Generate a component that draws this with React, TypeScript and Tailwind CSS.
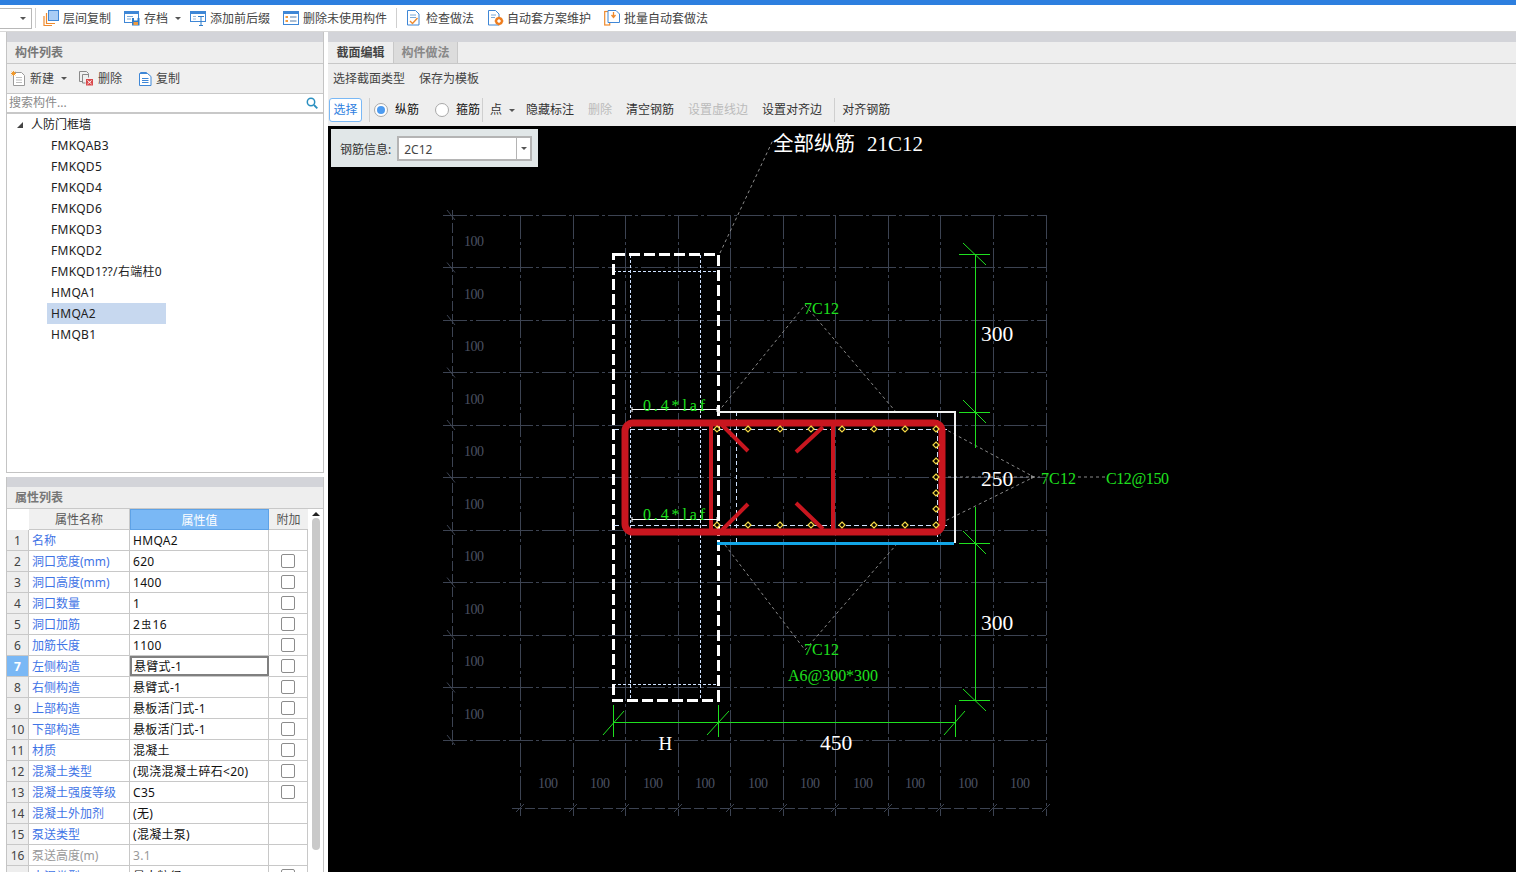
import React from "react";

const font = "font-['Noto_Sans','Noto_Sans_CJK_SC',sans-serif]";

const treeItems = ["FMKQAB3", "FMKQD5", "FMKQD4", "FMKQD6", "FMKQD3", "FMKQD2", "FMKQD1??/右端柱0", "HMQA1", "HMQA2", "HMQB1"];

const rows: { name: string; value: React.ReactNode; check: boolean }[] = [
  { name: "名称", value: "HMQA2", check: false },
  { name: "洞口宽度(mm)", value: "620", check: true },
  { name: "洞口高度(mm)", value: "1400", check: true },
  { name: "洞口数量", value: "1", check: true },
  { name: "洞口加筋", value: <>2<span className="relative top-[-1px] mx-[1px] text-[10px]">虫</span>16</>, check: true },
  { name: "加筋长度", value: "1100", check: true },
  { name: "左侧构造", value: "悬臂式-1", check: true },
  { name: "右侧构造", value: "悬臂式-1", check: true },
  { name: "上部构造", value: "悬板活门式-1", check: true },
  { name: "下部构造", value: "悬板活门式-1", check: true },
  { name: "材质", value: "混凝土", check: true },
  { name: "混凝土类型", value: "(现浇混凝土碎石<20)", check: true },
  { name: "混凝土强度等级", value: "C35", check: true },
  { name: "混凝土外加剂", value: "(无)", check: false },
  { name: "泵送类型", value: "(混凝土泵)", check: false },
  { name: "泵送高度(m)", value: "3.1", check: false },
  { name: "水泥类型", value: "最大粒径", check: true },
];

function Caret() {
  return <span className="inline-block h-0 w-0 border-x-[3px] border-t-[3px] border-x-transparent border-t-[#555]" />;
}

function CopyLayersIcon() {
  return (
    <svg width="16" height="16" viewBox="0 0 16 16" fill="none">
      <rect x="5.5" y="0.5" width="10" height="10" fill="#a9cdf5" stroke="#3f87d6" />
      <path d="M3.5 3v10.5H12M1 6v9.500h8" stroke="#ee8a2e" strokeWidth="1.200" />
    </svg>
  );
}
function SaveIcon() {
  return (
    <svg width="16" height="16" viewBox="0 0 16 16" fill="none">
      <rect x="0.500" y="1.500" width="14" height="11" fill="#fff" stroke="#3f87d6" />
      <rect x="0.500" y="1.500" width="14" height="2.500" fill="#3f87d6" />
      <path d="M3 6.500h6M3 9h4" stroke="#7aa9d8" />
      <rect x="8" y="8" width="7.500" height="7.500" fill="#2f7cc9" />
      <rect x="10" y="8" width="3.500" height="2.500" fill="#fff" />
      <rect x="9.500" y="12" width="4.500" height="3" fill="#f09a3e" />
    </svg>
  );
}
function PrefixIcon() {
  return (
    <svg width="16" height="16" viewBox="0 0 16 16" fill="none">
      <rect x="0.500" y="1.500" width="15" height="10" fill="#fff" stroke="#3f87d6" />
      <rect x="0.500" y="1.500" width="15" height="2.500" fill="#3f87d6" />
      <path d="M3 6.500h3M3 9h3" stroke="#9ab8d8" />
      <path d="M8 6.500h6M11 6.500v9M9 15.500h4" stroke="#2f7cc9" />
    </svg>
  );
}
function ListIcon() {
  return (
    <svg width="16" height="14" viewBox="0 0 16 14" fill="none">
      <rect x="0.500" y="0.500" width="15" height="13" fill="#fff" stroke="#3f87d6" />
      <rect x="0.500" y="0.500" width="15" height="2.500" fill="#3f87d6" />
      <rect x="2.500" y="5" width="2.500" height="2" fill="#f09a3e" />
      <rect x="2.500" y="9" width="2.500" height="2" fill="#f09a3e" />
      <path d="M7 6h6.500M7 10h6.500" stroke="#557ca8" />
    </svg>
  );
}
function CheckDocIcon() {
  return (
    <svg width="15" height="16" viewBox="0 0 15 16" fill="none">
      <path d="M1.500 0.500h8l3.500 3.500v11h-11.500z" fill="#fff" stroke="#3f87d6" />
      <path d="M4 5h6M4 7.500h6" stroke="#7aa9d8" />
      <path d="M4 11l2.500 2.500 5-5.500" stroke="#ee8a2e" strokeWidth="1.400" />
    </svg>
  );
}
function GearDocIcon() {
  return (
    <svg width="16" height="16" viewBox="0 0 16 16" fill="none">
      <path d="M0.500 0.500h7l3.500 3.500v11h-10.500z" fill="#fff" stroke="#3f87d6" />
      <path d="M3 5h5M3 7.500h4" stroke="#7aa9d8" />
      <circle cx="11" cy="11" r="3" fill="#fff" stroke="#ee7d1e" strokeWidth="2" />
      <path d="M11 6.500v9M6.500 11h9M8 8l6 6M14 8l-6 6" stroke="#ee7d1e" strokeWidth="1" />
      <circle cx="11" cy="11" r="1.500" fill="#fff" />
    </svg>
  );
}
function BatchIcon() {
  return (
    <svg width="16" height="16" viewBox="0 0 16 16" fill="none">
      <rect x="0.700" y="1.500" width="5" height="13.500" stroke="#ee8a2e" strokeWidth="1.200" />
      <path d="M4 0.500h8l3.500 3.500v8.500h-11.500z" fill="#fff" stroke="#3f87d6" />
      <path d="M9.500 2v5M7.500 5l2 2.500 2-2.500" stroke="#ee8a2e" strokeWidth="1.300" />
    </svg>
  );
}
function NewIcon() {
  return (
    <svg width="15" height="15" viewBox="0 0 15 15" fill="none">
      <path d="M2.500 1.500h8l3 3v10h-11z" fill="#fff" stroke="#9a9a9a" />
      <path d="M5 6.500h6M5 9h6M5 11.500h6" stroke="#bdbdbd" />
      <path d="M0 2.500h5M2.500 0v5M0.700 0.700l3.600 3.600M4.300 0.700l-3.600 3.600" stroke="#f09a2e" />
    </svg>
  );
}
function DeleteIcon() {
  return (
    <svg width="15" height="15" viewBox="0 0 15 15" fill="none">
      <path d="M0.500 0.500h7l2 2v1.500M0.500 0.500v10h3" stroke="#8a8a8a" />
      <path d="M3.500 3.500h6v3M3.500 3.500v8.500h3" stroke="#8a8a8a" />
      <rect x="7" y="8" width="7" height="6.500" fill="#d9484b" />
      <path d="M8.500 9.500l4 3.500M12.500 9.500l-4 3.500" stroke="#fff" />
    </svg>
  );
}
function CopyDocIcon() {
  return (
    <svg width="13" height="14" viewBox="0 0 13 14" fill="none">
      <path d="M1.500 1.500v-1h6l1 1" stroke="#3f87d6" />
      <path d="M0.500 1.500h8l3.500 3v9h-11.500z" fill="#fff" stroke="#3f87d6" />
      <path d="M3 6.500h6.500M3 8.500h6.500M3 10.500h6.500" stroke="#3f87d6" />
    </svg>
  );
}
function SearchIcon() {
  return (
    <svg width="12" height="12" viewBox="0 0 12 12" fill="none">
      <circle cx="5" cy="5" r="3.700" stroke="#2a8fc0" strokeWidth="1.500" />
      <path d="M8 8l3.300 3.300" stroke="#2a8fc0" strokeWidth="1.800" />
    </svg>
  );
}

function Radio({ on }: { on?: boolean }) {
  return (
    <span className="flex h-[14px] w-[14px] items-center justify-center rounded-full border border-[#a8a8a8] bg-white">
      {on && <span className="h-[8px] w-[8px] rounded-full bg-[#4d9bf0]" />}
    </span>
  );
}

function ToolLabel({ children }: { children: string }) {
  return <span className="pt-[2px]">{children}</span>;
}

function TopBar() {
  return (
    <div className="flex h-[27px] shrink-0 items-center border-b border-[#d8d8d8] bg-white text-[12px] leading-none text-[#444]">
      <div className="flex h-[21px] w-[32px] items-center justify-end border border-l-0 border-[#b8b8b8] pr-[5px]">
        <Caret />
      </div>
      <div className="ml-[3px] h-[20px] w-px bg-[#cfcfcf]" />
      <div className="ml-[7px] flex items-center gap-[4px]"><CopyLayersIcon /><ToolLabel>层间复制</ToolLabel></div>
      <div className="ml-[13px] flex items-center gap-[4px]"><SaveIcon /><ToolLabel>存档</ToolLabel></div>
      <div className="ml-[7px] flex items-center"><Caret /></div>
      <div className="ml-[9px] flex items-center gap-[4px]"><PrefixIcon /><ToolLabel>添加前后缀</ToolLabel></div>
      <div className="ml-[13px] flex items-center gap-[4px]"><ListIcon /><ToolLabel>删除未使用构件</ToolLabel></div>
      <div className="ml-[9px] h-[20px] w-px bg-[#cfcfcf]" />
      <div className="ml-[9px] flex items-center gap-[5px]"><CheckDocIcon /><ToolLabel>检查做法</ToolLabel></div>
      <div className="ml-[14px] flex items-center gap-[3px]"><GearDocIcon /><ToolLabel>自动套方案维护</ToolLabel></div>
      <div className="ml-[13px] flex items-center gap-[4px]"><BatchIcon /><ToolLabel>批量自动套做法</ToolLabel></div>
    </div>
  );
}

function PanelTitle({ title }: { title: string }) {
  return (
    <>
      <div className="h-[10px] shrink-0 bg-[#d3d4d9]" />
      <div className="flex h-[22px] shrink-0 items-center border-b border-[#c8c8c8] bg-[#eeeeee] pl-[8px] text-[12px] font-bold text-[#777]">
        {title}
      </div>
    </>
  );
}

function ComponentList() {
  return (
    <div className="flex h-[441px] shrink-0 flex-col border-x border-b border-[#c4c4c4] bg-white">
      <PanelTitle title="构件列表" />
      <div className="flex h-[30px] shrink-0 items-center border-b border-[#c8c8c8] bg-[#f0f0f0] pl-[4px] text-[12px] text-[#444]">
        <NewIcon />
        <span className="ml-[4px]">新建</span>
        <span className="ml-[7px] flex"><Caret /></span>
        <span className="ml-[12px] flex"><DeleteIcon /></span>
        <span className="ml-[4px]">删除</span>
        <span className="ml-[17px] flex"><CopyDocIcon /></span>
        <span className="ml-[4px]">复制</span>
      </div>
      <div className="flex h-[20px] shrink-0 items-center justify-between border-b-2 border-[#c8c8c8] pl-[2px] pr-[5px] text-[12px] text-[#8a8a8a]">
        <span>搜索构件...</span>
        <SearchIcon />
      </div>
      <div className="flex h-[21px] items-center pl-[10px] text-[12px] text-[#222]">
        <span className="h-0 w-0 border-b-[6px] border-l-[6px] border-b-[#444] border-l-transparent" />
        <span className="ml-[8px]">人防门框墙</span>
      </div>
      {treeItems.map((item) => (
        <div key={item} className="flex h-[21px] items-center pl-[40px] text-[12px] tracking-[0.3px] text-[#222]">
          <span className={item === "HMQA2" ? "flex h-[21px] w-[119px] items-center bg-[#c7d8ef] pl-[4px]" : "pl-[4px]"}>{item}</span>
        </div>
      ))}
    </div>
  );
}

function PropertyRow({ index, name, value, check }: { index: number; name: string; value: React.ReactNode; check: boolean }) {
  const selected = index === 7;
  const muted = index === 16;
  return (
    <div className="flex h-[21px] shrink-0 border-b border-[#c8c8c8] text-[12px]">
      <div className={selected ? "flex w-[22px] shrink-0 items-center justify-center border-r border-[#c8c8c8] bg-[#7ab8f5] pt-[2px] font-bold text-white" : "flex w-[22px] shrink-0 items-center justify-center border-r border-[#c8c8c8] bg-[#eeeeee] pt-[2px] text-[#444]"}>
        {index}
      </div>
      <div className={muted ? "flex w-[101px] shrink-0 items-center whitespace-nowrap border-r border-[#c8c8c8] pl-[3px] pt-[2px] text-[#999]" : "flex w-[101px] shrink-0 items-center whitespace-nowrap border-r border-[#c8c8c8] pl-[3px] pt-[2px] text-[#3f74e6]"}>
        {name}
      </div>
      <div className={selected ? "flex w-[139px] shrink-0 items-center border-2 border-[#808080] pl-[2px] pt-[1px] tracking-[0.3px] text-[#111]" : muted ? "flex w-[139px] shrink-0 items-center border-r border-[#c8c8c8] pl-[3px] pt-[2px] tracking-[0.3px] text-[#999]" : "flex w-[139px] shrink-0 items-center border-r border-[#c8c8c8] pl-[3px] pt-[2px] tracking-[0.3px] text-[#111]"}>
        <span>{value}</span>
      </div>
      <div className="flex w-[39px] shrink-0 items-center justify-center border-r border-[#c8c8c8]">
        {check && <span className="h-[14px] w-[14px] rounded-[2px] border border-[#8c8c8c] bg-white" />}
      </div>
    </div>
  );
}

function PropertyList() {
  return (
    <div className="mt-[4px] flex min-h-0 flex-1 flex-col border-x border-[#c4c4c4] bg-white">
      <PanelTitle title="属性列表" />
      <div className="flex min-h-0 flex-1">
        <div className="w-[301px] shrink-0 overflow-hidden">
          <div className="flex h-[21px] text-[12px]">
            <div className="w-[22px] shrink-0 bg-white" />
            <div className="flex w-[101px] shrink-0 items-center justify-center border-b border-r border-[#c8c8c8] bg-[#f0f0f0] pt-[2px] text-[#555]">属性名称</div>
            <div className="flex w-[139px] shrink-0 items-center justify-center border border-[#5ea2e6] bg-[#7ab8f5] pt-[2px] text-white">属性值</div>
            <div className="flex w-[39px] shrink-0 items-center justify-center border-b border-[#c8c8c8] bg-[#f0f0f0] pt-[2px] text-[#555]">附加</div>
          </div>
          {rows.map((r, i) => (
            <PropertyRow key={r.name} index={i + 1} name={r.name} value={r.value} check={r.check} />
          ))}
        </div>
        <div className="flex w-[15px] shrink-0 flex-col items-center pt-[3px]">
          <span className="h-0 w-0 border-x-[4px] border-b-[4px] border-x-transparent border-b-[#222]" />
          <span className="mt-[2px] h-[332px] w-[8px] rounded-full bg-[#c9c9c9]" />
        </div>
      </div>
    </div>
  );
}

const gridY = [215, 267.500, 320, 372.500, 425, 477.500, 530, 582.500, 635, 687.500, 740];
const gridX = [520, 573, 625, 678, 730, 783, 835, 888, 940, 993, 1046];
const leftLabels = [241, 294, 346, 399, 451, 504, 556, 609, 661, 714];
const bottomLabels = [548, 600, 653, 705, 758, 810, 863, 915, 968, 1020];
const rebarX = [717, 748, 780, 811, 842, 874, 905, 936];
const rebarY = [445, 461, 477, 493, 509];

function Rebar({ x, y }: { x: number; y: number }) {
  return <path d={`M${x} ${y - 3}L${x + 3} ${y}L${x} ${y + 3}L${x - 3} ${y}Z`} fill="#000" stroke="#f5d845" strokeWidth="1.200" />;
}

function CadText({ x, y, w, children }: { x: number; y: number; w: number; children: string }) {
  return <text x={x} y={y} textLength={w} lengthAdjust="spacing">{children}</text>;
}

function SectionDrawing() {
  const serif = "'Liberation Serif',serif";
  const grid = "#3c4352";
  const green = "#1fe01f";
  const leader = "#8a8a8a";
  return (
    <svg className="block h-full w-full" viewBox="328 126 1188 746" fill="none">
      {/* axis grid */}
      <g stroke={grid} strokeDasharray="24 3 3 3" shapeRendering="crispEdges">
        {gridY.map((y) => <line key={y} x1="443" y1={y} x2="1046" y2={y} />)}
        {gridX.map((x) => <line key={x} x1={x} y1="215" x2={x} y2="816" />)}
        <line x1="452" y1="210" x2="452" y2="745" strokeDasharray="10 3" />
        <line x1="512" y1="808" x2="1046" y2="808" strokeDasharray="10 3" />
      </g>
      <g stroke={grid}>
        {gridY.map((y) => <line key={y} x1="447" y1={y - 5} x2="455" y2={y + 5} />)}
        {[520, ...gridX].map((x, i) => <line key={i} x1={x - 4} y1="812" x2={x + 4} y2="804" />)}
      </g>
      <g fill="#4a5060" fontFamily={serif} fontSize="14">
        {leftLabels.map((y) => <CadText key={y} x={464} y={y + 5} w={20}>100</CadText>)}
        {bottomLabels.map((x) => <CadText key={x} x={x - 10} y={788} w={20}>100</CadText>)}
      </g>

      {/* leaders */}
      <g stroke={leader} strokeDasharray="3 3">
        <path d="M720 253L773 140" />
        <path d="M718 412L805 305L896 412" />
        <path d="M725 545L805 650L896 545" />
        <path d="M943 428L1034 477L943 522" />
        <path d="M936 477H1040M1078 477H1105" />
      </g>
      <path d="M1031 475L1035 477L1031 479Z" fill={leader} />

      {/* wall outline */}
      <g shapeRendering="crispEdges">
        <path d="M630 255V700M700 255V700M613 271H718M613 684H718" stroke="#cfe2ff" strokeDasharray="3 2" />
        <rect x="613.500" y="254.500" width="104.500" height="445.500" stroke="#fff" strokeWidth="3" strokeDasharray="11 4" />
        <path d="M736 412V543" stroke="#cfe2ff" strokeDasharray="4 3" />
        <path d="M614 429H950M614 525H950M937 412V543" stroke="#cfe2ff" strokeDasharray="5 3" />
        <path d="M717 412H955V543" stroke="#f2f2f2" strokeWidth="2" />
        <path d="M717 543H954" stroke="#12a5e6" strokeWidth="3" />
      </g>

      {/* stirrups */}
      <g stroke="#c8161f">
        <rect x="625" y="423" width="317" height="109" rx="8" strokeWidth="7" />
        <path d="M711 423V532M833 423V532" strokeWidth="4" />
        <path d="M722 425L748 451M823 427L796 452M722 530L748 504M823 529L796 503" strokeWidth="4" />
      </g>

      {/* rebars */}
      {rebarX.map((x) => <Rebar key={x} x={x} y={429} />)}
      {rebarX.map((x) => <Rebar key={x} x={x} y={525} />)}
      {rebarY.map((y) => <Rebar key={y} x={936} y={y} />)}

      {/* anchorage marks */}
      <path d="M632 409.500H717M632 407V412M717 407V412M632 519.500H717M632 517V522M717 517V522" stroke="#fff" />
      <g fill={green} fontFamily={serif} fontSize="16">
        <CadText x={643} y={411} w={62}>0.4*laf</CadText>
        <CadText x={643} y={520} w={62}>0.4*laf</CadText>
        <CadText x={804} y={314} w={35}>7C12</CadText>
        <CadText x={804} y={655} w={35}>7C12</CadText>
        <CadText x={788} y={681} w={90}>A6@300*300</CadText>
        <CadText x={1041} y={484} w={35}>7C12</CadText>
        <CadText x={1106} y={484} w={63}>C12@150</CadText>
      </g>

      {/* dimensions */}
      <g stroke={green}>
        <path d="M975.500 254V448M975.500 507V700" shapeRendering="crispEdges" />
        <path d="M959 254H990M959 412H990M959 543H990M959 700H990" shapeRendering="crispEdges" />
        <path d="M963 243L986 265M963 400L986 423M963 531L986 554M963 689L986 711" />
        <path d="M613 722H955" shapeRendering="crispEdges" />
        <path d="M613 705V737M718 705V737M955 705V737" shapeRendering="crispEdges" />
        <path d="M603 735L624 711M707 735L729 711M944 735L965 711" />
      </g>
      <g fill="#fff" fontFamily={serif} fontSize="21.500">
        <text x="981" y="341">300</text>
        <text x="981" y="486">250</text>
        <text x="981" y="630">300</text>
        <text x="658.500" y="750" fontSize="19">H</text>
        <text x="820" y="750">450</text>
      </g>
      <text x="773" y="151" fill="#fff" fontFamily="'Noto Sans CJK SC',sans-serif" fontSize="20.500">全部纵筋</text>
      <text x="867" y="151" fill="#fff" fontFamily={serif} fontSize="21">21C12</text>
    </svg>
  );
}

function Editor() {
  return (
    <div className="flex min-w-0 flex-1 flex-col bg-[#eeeeee]">
      <div className="h-[10px] shrink-0 bg-[#d3d4d9]" />
      <div className="flex h-[22px] shrink-0 border-b border-[#c8c8c8] text-[12px] font-bold">
        <div className="flex w-[66px] items-center justify-center border-r border-[#c8c8c8] bg-[#eeeeee] text-[#444]">截面编辑</div>
        <div className="flex w-[64px] items-center justify-center border-r border-[#c8c8c8] bg-[#dcdcdc] text-[#888]">构件做法</div>
      </div>
      <div className="flex h-[30px] shrink-0 items-center gap-[14px] pl-[5px] text-[12px] text-[#444]">
        <span>选择截面类型</span>
        <span>保存为模板</span>
      </div>
      <div className="flex h-[32px] shrink-0 items-center text-[12px] text-[#333]">
        <div className="ml-[1px] flex h-[24px] w-[33px] items-center justify-center rounded-[3px] border border-[#7ab8f5] bg-white text-[#2f7fe0]">选择</div>
        <div className="ml-[7px] h-[24px] w-px bg-[#cfcfcf]" />
        <div className="ml-[4px]"><Radio on /></div>
        <span className="ml-[7px] text-[#111]">纵筋</span>
        <div className="ml-[16px]"><Radio /></div>
        <span className="ml-[7px] text-[#111]">箍筋</span>
        <div className="ml-[2px] h-[24px] w-px bg-[#cfcfcf]" />
        <span className="ml-[7px]">点</span>
        <span className="ml-[7px] flex"><Caret /></span>
        <span className="ml-[11px]">隐藏标注</span>
        <span className="ml-[14px] text-[#bbb]">删除</span>
        <span className="ml-[14px]">清空钢筋</span>
        <span className="ml-[14px] text-[#bbb]">设置虚线边</span>
        <span className="ml-[14px]">设置对齐边</span>
        <div className="ml-[12px] h-[24px] w-px bg-[#cfcfcf]" />
        <span className="ml-[7px]">对齐钢筋</span>
      </div>
      <div className="relative min-h-0 flex-1 bg-black">
        <SectionDrawing />
        <div className="absolute left-[3px] top-[3px] flex h-[38px] w-[207px] items-center bg-[#e1e7e8] pl-[9px] pt-[1px] text-[12px] text-[#333]">
          <span className="pt-[2px]">钢筋信息:</span>
          <div className="ml-[6px] flex h-[25px] w-[135px] items-center border-2 border-[#b4b4b4] bg-white pl-[5px]">
            <span className="flex-1 pt-[2px] text-[#444]">2C12</span>
            <div className="flex h-full w-[14px] items-center justify-center border-l border-[#b4b4b4]"><Caret /></div>
          </div>
        </div>
      </div>
    </div>
  );
}

export default function App() {
  return (
    <div className={`flex h-[872px] w-[1516px] flex-col overflow-hidden bg-white ${font}`}>
      <div className="h-[5px] shrink-0 bg-[#2d7fdf]" />
      <TopBar />
      <div className="flex min-h-0 flex-1">
        <div className="flex w-[328px] shrink-0 flex-col pl-[6px] pr-[4px]">
          <ComponentList />
          <PropertyList />
        </div>
        <Editor />
      </div>
    </div>
  );
}
